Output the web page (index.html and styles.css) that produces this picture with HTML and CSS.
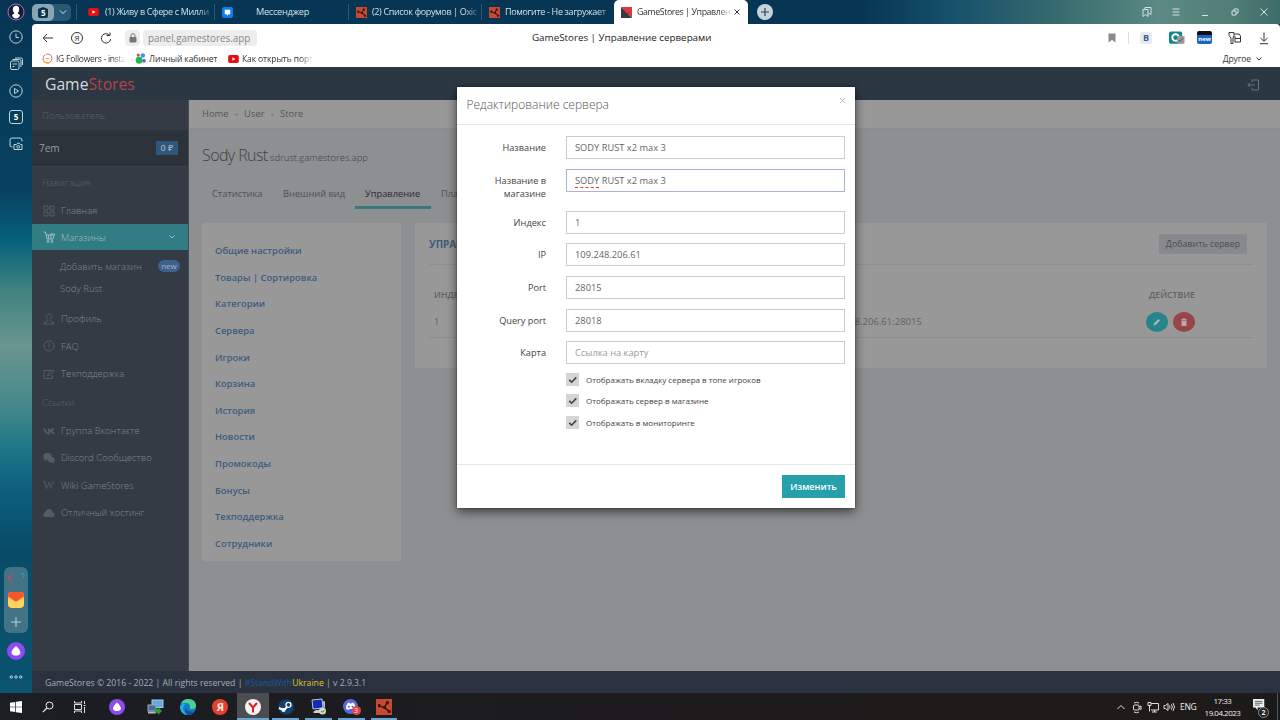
FILE: index.html
```
<!DOCTYPE html>
<html lang="ru">
<head>
    <meta charset="UTF-8">
    <meta name="viewport" content="width=device-width, initial-scale=1.0">
    <title>GameStores | Управление серверами</title>
    <link rel="stylesheet" href="styles.css">
</head>
<body>
    <!-- shared icons -->
    <svg width="0" height="0" class="defs">
        <symbol id="youtube" viewBox="0 0 12 9"><rect width="12" height="9" rx="2" fill="#e80c14"/><path d="M4.7 2.5v4L8.2 4.5z" fill="#fff"/></symbol>
        <symbol id="rust" viewBox="0 0 12 12"><rect width="12" height="12" fill="#c44a32"/><path d="M6.5 6.5L2 5M6.5 6.5L8.5 2M6.5 6.5l3.500 3" fill="none" stroke="#3d1510" stroke-width="1.100"/><path d="M1.500 3.800h1.800v2.400H1.500zM7.500 1.500l2.500.6-.8 2-1.700-.6zM8.800 8.500h2.200v2H8.800zM5.500 5.500h2v2h-2z" fill="#3d1510"/></symbol>
        <symbol id="alice" viewBox="0 0 18 18"><circle cx="9" cy="9" r="9" fill="#8d4cf2"/><path d="M9 4.200c1.300 0 4.800 5 4.500 6.800C13.200 13 11 13.500 9 13.500S4.800 13 4.500 11C4.200 9.200 7.700 4.200 9 4.200z" fill="#fff"/></symbol>
        <symbol id="check" viewBox="0 0 12 12"><path d="M3 6.300l2.200 2.200L9.500 4" fill="none" stroke="#444" stroke-width="1.500"/></symbol>
    </svg>

    <div class="desktop">
        <div class="tabbar">
            <svg class="profile" viewBox="0 0 18 18"><circle cx="9" cy="9" r="8" fill="#171c38" stroke="#9d6fc8" stroke-width="1"/><path d="M9 2.800c3 0 3.500 2.500 3 4.600-.3 1.500-1 2-1.200 3l2.200 1.500c-.5 2-2 3.500-4 3.500s-3.500-1.500-4-3.500l2.200-1.500C6.900 9.300 5.800 8.500 5.800 6.500c0-2.300 1.200-3.700 3.200-3.700z" fill="#fff"/></svg>
            <div class="tabcount"><svg viewBox="0 0 22 17"><rect width="22" height="17" rx="5" fill="#87a5b5"/><path d="M6 5L11 3l5 2v7q0 2-2 2H8q-2 0-2-2z" fill="#083450"/></svg><b>5</b><svg class="chev" viewBox="0 0 8 8"><path d="M1 2.500l3 3 3-3"/></svg></div>
            <div class="tab t1"><svg class="yt"><use href="#youtube"/></svg><span>(1) Живу в Сфере с Милли</span></div>
            <div class="tab t2"><svg viewBox="0 0 12 12"><rect width="12" height="12" rx="2.500" fill="#127de8"/><path d="M3 3h6v5H7L6 9.500 5 8H3z" fill="#fff"/></svg><span>Мессенджер</span></div>
            <div class="tab t3"><svg><use href="#rust"/></svg><span>(2) Список форумов | Oxic</span></div>
            <div class="tab t4"><svg><use href="#rust"/></svg><span>Помогите - Не загружает</span></div>
            <div class="tab active"><svg viewBox="0 0 12 12"><path d="M0 0h12v12z" fill="#e2353c"/><path d="M0 0l12 12H0z" fill="#333a44"/><path d="M3 3l3 5 3-2" stroke="#811e2a" fill="none"/></svg><span>GameStores | Управлен</span><svg class="close" viewBox="0 0 8 8"><path d="M1.500 1.500l5 5M6.500 1.500l-5 5"/></svg></div>
            <svg class="plus" viewBox="0 0 16 16"><circle cx="8" cy="8" r="8" fill="#c5d3dc"/><path d="M8 4v8M4 8h8" stroke="#33424e" stroke-width="1.200"/></svg>
            <div class="winbtns">
                <svg viewBox="0 0 12 12"><path d="M2 3.500h5v7L4.500 8.500 2 10.500zM4 3.500V1.500h6v7l-3-1.500"/></svg>
                <svg viewBox="0 0 12 12"><path d="M2.500 3h7M2.500 6h7M2.500 9h7"/></svg>
                <svg viewBox="0 0 12 12"><path d="M3 9.500h6"/></svg>
                <svg viewBox="0 0 12 12"><path d="M3 5h4v4H3zM5 5V3h4v4H7"/></svg>
                <svg viewBox="0 0 12 12"><path d="M2.500 2.500l7 7M9.500 2.500l-7 7"/></svg>
            </div>
        </div>

        <div class="workspace">
            <div class="rail">
                <svg viewBox="0 0 14 14"><circle cx="7" cy="7" r="6.200"/><path d="M7 3.500V7.500h3"/></svg>
                <svg viewBox="0 0 14 14"><rect x="1.500" y="4" width="8.500" height="8.500" rx="1.500"/><path d="M3.500 2.500h7q1.500 0 1.500 1.500v6M3.500 7h4.500M3.500 9.500h2M6 1h6q1.500 0 1.500 1.500V8"/></svg>
                <svg viewBox="0 0 14 14"><circle cx="7" cy="7" r="6.200"/><path d="M5.500 4.500v5L9.500 7z"/></svg>
                <div class="five">5</div>
                <svg viewBox="0 0 14 14"><path d="M3.500 10H3Q1 10 1 8V3q0-2 2-2h8q2 0 2 2v1.500M6 7.500h1.500l1-1.300h2l1 1.300H13v5H5v-5z"/><circle cx="9.300" cy="9.800" r="1.400"/></svg>
                <div class="dock">
                    <svg class="game" viewBox="0 0 18 14"><path class="red" d="M5 3L1.500 7 5 11"/><path class="blue-line" d="M14 2.500l2.500.5v4"/></svg>
                    <svg class="mail" viewBox="0 0 16 16"><rect width="16" height="16" rx="4" fill="#ffd45e" stroke="none"/><path d="M0 4Q0 0 4 0h8q4 0 4 4v1L8 10 0 5z" fill="#f4582a" stroke="none"/><path d="M0 5l8 5 8-5" stroke="#ffb340"/></svg>
                    <svg viewBox="0 0 14 14"><path d="M7 2v10M2 7h10"/></svg>
                </div>
                <svg class="alice"><use href="#alice"/></svg>
                <svg class="dots" viewBox="0 0 14 6"><circle cx="2.300" cy="3" r="1.200"/><circle cx="7" cy="3" r="1.200"/><circle cx="11.700" cy="3" r="1.200"/></svg>
            </div>

            <div class="browser">
                <div class="address">
                    <svg viewBox="0 0 14 14"><path d="M12 7H2.500M6 3L2.200 7 6 11"/></svg>
                    <div class="ya">Я</div>
                    <svg viewBox="0 0 14 14"><path d="M10.800 4.500A4.700 4.700 0 1 0 11.700 8M7.500 4.500h3.500V1.500"/></svg>
                    <div class="lock"><svg viewBox="0 0 10 10"><rect x="1.500" y="4" width="7" height="5.500" rx="1" fill="#777"/><path d="M3 4V2.500q0-1.800 2-1.800t2 1.800V4" fill="none" stroke="#777"/></svg></div>
                    <div class="url">panel.gamestores.app</div>
                    <div class="pagetitle">GameStores | Управление серверами</div>
                    <div class="tools">
                        <svg viewBox="0 0 14 14"><path d="M3.500 2.500h7v9L7 9l-3.500 2.500z" fill="#8b8b8b" stroke="none"/></svg>
                        <i></i>
                        <div class="vk">B</div>
                        <svg class="ext" viewBox="0 0 17 14"><rect x="0" y="0" width="14" height="13" rx="2" fill="#11868e" stroke="none"/><circle cx="7" cy="6.500" r="3.500" fill="#11868e" stroke="#fff" stroke-width="2"/><rect x="8.500" y="5" width="8" height="8" rx="1" fill="#999" stroke="none"/><path d="M10.500 9l1.500 1.700L14.500 7" stroke="#555"/></svg>
                        <div class="new-ext">new</div>
                        <svg viewBox="0 0 14 14"><path d="M1 1.500h5v3L5 7v5.500H3V7L1 4.500zM6.500 3H11l1.500 2v6H7V5M7 7.500h5.500"/></svg>
                        <svg viewBox="0 0 14 14"><path d="M7 1.500v8.500M3.500 7L7 10.300 10.500 7M3 12.700h8"/></svg>
                    </div>
                </div>
                <div class="bookmarks">
                    <div class="bm b1"><svg viewBox="0 0 12 12"><circle cx="6" cy="6" r="4.800" fill="none" stroke="#dd574b" stroke-dasharray="9 1"/><path d="M1.200 7A5 5 0 0 0 8 10.500" stroke="#f2ad38" fill="none" stroke-width="1.500"/><path d="M4 6h4" stroke="#e88" /></svg><span>IG Followers - insta</span></div>
                    <div class="bm b2"><svg viewBox="0 0 12 12"><circle cx="4.500" cy="7.800" r="3.800" fill="#1dbb56"/><circle cx="3.500" cy="2.300" r="1.700" fill="#e44"/><circle cx="8.500" cy="2.800" r="2.500" fill="#3c9be8"/><circle cx="9.800" cy="8.500" r="2" fill="#7b59c5"/></svg><span>Личный кабинет</span></div>
                    <div class="bm b3"><svg><use href="#youtube"/></svg><span>Как открыть порт</span></div>
                    <div class="other">Другое <svg viewBox="0 0 8 8"><path d="M1.500 2.500L4 5l2.500-2.500"/></svg></div>
                </div>

                <div class="page">
                    <div class="header">
                        <div class="logo">Game<span>Stores</span></div>
                        <svg viewBox="0 0 12 12"><path d="M5 3.500V1h6.500v10H5V8.500M8 6H.8M3 4L.8 6 3 8"/></svg>
                    </div>
                    <div class="main">
                        <div class="sidebar">
                            <div class="heading">Пользователь</div>
                            <div class="user"><span>7em</span><b>0 ₽</b></div>
                            <div class="heading">Навигация</div>
                            <div class="nav"><svg viewBox="0 0 12 12"><path d="M1 1h4v4H1zM7 1h4v4H7zM1 7h4v4H1zM7 7h4v4H7z"/></svg>Главная</div>
                            <div class="nav current"><svg viewBox="0 0 12 12"><path d="M.5 1h2l1.500 7h6l1.500-5H7M3 4h8M5.500 4v4M8 4v4"/><circle cx="5" cy="10.500" r="1"/><circle cx="9" cy="10.500" r="1"/></svg>Магазины<svg class="arrow" viewBox="0 0 8 8"><path d="M1.500 2.500L4 5l2.500-2.500"/></svg></div>
                            <div class="submenu">
                                <div>Добавить магазин<em>new</em></div>
                                <div>Sody Rust</div>
                            </div>
                            <div class="nav"><svg viewBox="0 0 12 12"><path d="M6 1C2 1 3.500 6 4.800 6.800V8L1 9.500V11h10V9.500L7.200 8V6.800C8.500 6 10 1 6 1z"/></svg>Профиль</div>
                            <div class="nav"><svg viewBox="0 0 12 12"><circle cx="6" cy="6" r="5"/><path d="M6 3v4M6 8v1"/></svg>FAQ</div>
                            <div class="nav"><svg viewBox="0 0 12 12"><path d="M8 2.500H1v8h8.500V7M4.500 8l.5-2 5-4.500 1.200 1.300L6.500 7.500z"/></svg>Техподдержка</div>
                            <div class="heading">Ссылки</div>
                            <div class="nav"><svg viewBox="0 0 12 12"><path d="M1 3.500Q3 8.500 6 8.500V3.500M6 6q2 0 4.500-2.500M6.500 6q3 0 4.500 3" stroke-width="1.800"/></svg>Группа Вконтакте</div>
                            <div class="nav solid"><svg viewBox="0 0 12 12"><ellipse cx="4.500" cy="4.500" rx="4.300" ry="3.500"/><ellipse cx="8.500" cy="8" rx="3.300" ry="2.800"/><path d="M1.500 6v3l2.500-1.500zM9 10l2 1.500V9z"/></svg>Discord Сообщество</div>
                            <div class="nav"><i class="wiki">W</i>Wiki GameStores</div>
                            <div class="nav solid"><svg viewBox="0 0 12 12"><path d="M2.500 10Q0 10 .3 7.500.6 6 2 5.500 3 2 6 2t3.500 3.300Q12 5.800 11.800 8 11.500 10 9.500 10z"/></svg>Отличный хостинг</div>
                        </div>

                        <div class="content">
                            <div class="crumbs"><span>Home</span><i></i><span>User</span><i></i><span>Store</span></div>
                            <div class="title">Sody Rust <small>sdrust.gamestores.app</small></div>
                            <div class="tabs">
                                <span class="s1">Статистика</span>
                                <span class="s2">Внешний вид</span>
                                <span class="s3 on">Управление</span>
                                <span class="s4">Платежи</span>
                            </div>
                            <div class="columns">
                                <div class="card menu">
                                    <a>Общие настройки</a>
                                    <a>Товары | Сортировка</a>
                                    <a>Категории</a>
                                    <a>Сервера</a>
                                    <a>Игроки</a>
                                    <a>Корзина</a>
                                    <a>История</a>
                                    <a>Новости</a>
                                    <a>Промокоды</a>
                                    <a>Бонусы</a>
                                    <a>Техподдержка</a>
                                    <a>Сотрудники</a>
                                </div>
                                <div class="card servers">
                                    <div class="servers-head"><b>УПРАВЛЕНИЕ</b><span class="add">Добавить сервер</span></div>
                                    <div class="row th"><span>ИНДЕКС</span><span></span><span>ДЕЙСТВИЕ</span></div>
                                    <div class="row"><span>1</span><span>109.248.206.61:28015</span><span class="actions">
                                        <i class="edit"><svg viewBox="0 0 10 10"><path d="M1.500 8.500l.5-2L6.500 2 8 3.500 3.500 8z" fill="#a9b9bb"/></svg></i>
                                        <i class="del"><svg viewBox="0 0 10 10"><path d="M2 2.300h6v1.200H2zM2.500 4h5v5h-5zM4 1.300h2v1H4z" fill="#bba5a8"/></svg></i>
                                    </span></div>
                                </div>
                            </div>
                        </div>
                    </div>
                    <div class="footer">GameStores © 2016 - 2022 | All rights reserved | <span class="blue">#StandWith</span><span class="yellow">Ukraine</span> | v 2.9.3.1</div>

                    <div class="modal">
                        <div class="modal-header"><span>Редактирование сервера</span><svg viewBox="0 0 8 8"><path d="M1 1l6 6M7 1L1 7"/></svg></div>
                        <div class="modal-body">
                            <div class="group"><label>Название</label><div class="input">SODY RUST x2 max 3</div></div>
                            <div class="group tall"><label>Название в<br>магазине</label><div class="input focus"><u>SODY</u> RUST x2 max 3</div></div>
                            <div class="group"><label>Индекс</label><div class="input">1</div></div>
                            <div class="group"><label>IP</label><div class="input">109.248.206.61</div></div>
                            <div class="group"><label>Port</label><div class="input">28015</div></div>
                            <div class="group"><label>Query port</label><div class="input">28018</div></div>
                            <div class="group"><label>Карта</label><div class="input placeholder">Ссылка на карту</div></div>
                            <div class="checks">
                                <div><svg><use href="#check"/></svg>Отображать вкладку сервера в топе игроков</div>
                                <div><svg><use href="#check"/></svg>Отображать сервер в магазине</div>
                                <div><svg><use href="#check"/></svg>Отображать в мониторинге</div>
                            </div>
                        </div>
                        <div class="modal-footer"><div class="save">Изменить</div></div>
                    </div>
                </div>
            </div>
        </div>

        <div class="taskbar">
            <div class="sys"><svg viewBox="0 0 12 12"><path d="M0 1.700l5.300-.8v4.800H0zM6 .8L12 0v5.700H6zM0 6.300h5.300v4.800L0 10.300zM6 6.300h6V12l-6-.8z" fill="#fff"/></svg></div>
            <div class="sys"><svg viewBox="0 0 12 12"><circle cx="7.500" cy="4.500" r="3.500" fill="none" stroke="#eee"/><path d="M5 7L.8 11.200" stroke="#eee" stroke-width="1.200"/></svg></div>
            <div class="sys"><svg viewBox="0 0 12 12"><path d="M.5 0v2h7V0M.5 12v-2h7v2M.5 3.500h7v5h-7zM10.500 0v3M10.500 6v6M9.500 4.500h2" fill="none" stroke="#ddd"/></svg></div>
            <div class="app gap"><svg><use href="#alice"/></svg></div>
            <div class="app gap"><svg viewBox="0 0 16 16"><rect x="5" y="1" width="11" height="7.500" fill="#69a8dc" stroke="#a7cbea"/><rect x="1" y="6" width="8" height="6" fill="#3d70a8" stroke="#aaa"/><path d="M1 13.500h8" stroke="#bbb" stroke-width="2"/><path d="M8 10h3V8l4 4-4 4v-2H8z" fill="#2a9c3c"/></svg></div>
            <div class="app"><svg viewBox="0 0 16 16"><circle cx="8" cy="8" r="8" fill="#147cc9"/><path d="M1 5Q3 0 8 0q8 0 8 7 0 3-4 3-3 0-2-2 0-4-4-4-3 0-5 1z" fill="#4dcf91"/><path d="M0 8q2-4 6-3-3 1-3 5 1 4 5 6-7 0-8-8z" fill="#27b4dc"/><path d="M6 8q0 5 8 4.500Q12 16 8 16 4 13 6 8z" fill="#0e529c"/></svg></div>
            <div class="app"><div class="round">Я</div></div>
            <div class="app selected"><svg viewBox="0 0 16 16"><circle cx="8" cy="8" r="8" fill="#f4f2f2"/><path d="M4 4l4 4.500L12 4M8 8v5.500" fill="none" stroke="#d4232b" stroke-width="2"/></svg></div>
            <div class="app open"><svg viewBox="0 0 16 16"><circle cx="8" cy="8" r="7.800" fill="#10416f"/><path d="M1 9l5 2 4-4" stroke="#fff" stroke-width="2" fill="none"/><circle cx="10.500" cy="5.800" r="2.500" fill="#10416f" stroke="#fff" stroke-width="1.300"/><circle cx="5.500" cy="11" r="2" fill="#fff"/></svg></div>
            <div class="app open"><svg viewBox="0 0 16 16"><path d="M2 1l10-1 1 9-10 1z" fill="#142bb5" stroke="#b9c5d3"/><path d="M3 13l3-2h5l1 3H4z" fill="#c9ced4"/><circle cx="12.500" cy="12" r="3.500" fill="#cfdccf"/><path d="M11 12l1.500 1.300L14.500 11" stroke="#37884a" fill="none"/><path d="M13 2l2 .5v6l-1.500.5" fill="#bcc4ce"/></svg></div>
            <div class="app open"><svg viewBox="0 0 16 16"><circle cx="7.500" cy="7.500" r="7.500" fill="#5967dd"/><path d="M3 10q0-4 1.500-6l2-.5.5 1h1.500l.5-1 2 .5q1.500 2 1.500 6l-2 1-1-1h-3l-1 1z" fill="#fff"/><circle cx="5.800" cy="7.800" r="1" fill="#5967dd"/><circle cx="9.500" cy="7.800" r="1" fill="#5967dd"/></svg><small>3</small></div>
            <div class="app open"><svg><use href="#rust"/></svg></div>
            <div class="tray">
                <svg viewBox="0 0 12 12"><path d="M2.500 8L6 4.500 9.500 8"/></svg>
                <svg viewBox="0 0 12 12"><rect x="2.500" y="4" width="5.500" height="5" rx="1"/><path d="M8 6l2-1v3.500L8 7.500M3 2q2.500-1.500 5 0M3 11q2.500 1.500 5 0"/></svg>
                <svg viewBox="0 0 12 12"><path d="M4 2.500h7.500V9H4M1 1.500h3v3H1zM2.500 4.500v6M7.500 9v2M5 11h5"/></svg>
                <svg viewBox="0 0 12 12"><path d="M1 4.500h1.500L5 2.500v7L2.500 7.500H1zM6.500 4.500q1 1.500 0 3M8.300 3.200q2 2.800 0 5.600M10 2q3 4 0 8"/></svg>
                <span class="lang">ENG</span>
                <div class="clock"><span>17:33</span><span>19.04.2023</span></div>
                <div class="notes"><svg viewBox="0 0 16 16"><path d="M0 0h12v9H5v3L2.500 9H0z" fill="#eee"/><path d="M2 2.500h8M2 4.500h8M2 6.500h5" stroke="#333" stroke-width=".8"/></svg><b>2</b></div>
                <i class="edge"></i>
            </div>
        </div>
    </div>
</body>
</html>
```
FILE: styles.css
```
* {
    box-sizing: border-box;
}
body {
    margin: 0;
    font-family: "Open Sans", "Noto Sans", sans-serif;
    font-size: 9.3px;
    line-height: 1.4;
    overflow: hidden;
}
i, em {
    font-style: normal;
}
svg {
    display: block;
    flex: none;
    overflow: visible;
}
.defs {
    position: absolute;
}
.desktop {
    width: 1280px;
    height: 720px;
    display: flex;
    flex-direction: column;
    background: linear-gradient(#063654 0, #07415f 190px, #07607a 240px, #40827f 290px, #69958f 345px, #498a8b 400px, #207887 445px, #0c5f7d 490px, #084b67 550px, #0a5470 693px);
}

/* Tab strip */
.tabbar {
    height: 24px;
    display: flex;
    align-items: center;
    background: linear-gradient(90deg, #063654 0, #063653 860px, #15506b 950px, #34696d 1050px, #5c8983 1160px, #527e77 1230px, #3d6b67 1280px);
    color: #d3e0e8;
    font-size: 9px;
    letter-spacing: -.35px;
    white-space: nowrap;
}
.profile {
    width: 18px;
    height: 18px;
    margin: 0 7px;
}
.tabcount {
    width: 39px;
    height: 17px;
    margin-right: 5px;
    border-radius: 5px;
    background: #2a5872;
    display: flex;
    align-items: center;
    position: relative;
}
.tabcount svg {
    width: 22px;
    height: 17px;
}
.tabcount b {
    position: absolute;
    left: 9px;
    top: 3px;
    color: #fff;
    font-size: 8px;
}
.tabcount .chev {
    width: 8px;
    height: 8px;
    margin-left: 5px;
}
.chev path, .close path, .winbtns path, .arrow path, .other path, .modal-header path {
    fill: none;
    stroke: currentColor;
}
.tab {
    display: flex;
    align-items: center;
    height: 16px;
    border-left: 1px solid #32586e;
    padding-left: 7px;
}
.tab svg {
    width: 11px;
    height: 11px;
    margin-right: 5px;
}
.tab span {
    overflow: hidden;
    flex: 1;
    -webkit-mask-image: linear-gradient(90deg, #000 85%, transparent);
    mask-image: linear-gradient(90deg, #000 85%, transparent);
}
.t1 {
    width: 138px;
    padding-left: 11px;
}
.tab .yt {
    height: 8px;
    margin-right: 6px;
}
.t2 {
    width: 134px;
}
.t2 svg {
    margin-right: 23px;
}
.t2 span {
    font-size: 9.2px;
    letter-spacing: -.3px;
    -webkit-mask-image: none;
    mask-image: none;
}
.t3 {
    width: 133px;
}
.t4 {
    width: 133px;
}
.tab.active {
    width: 134px;
    height: 24px;
    padding: 0 7px;
    border: 0;
    border-radius: 5px 5px 0 0;
    background: #fff;
    color: #333;
    font-size: 8.8px;
    letter-spacing: -.4px;
}
.tab .close {
    width: 8px;
    height: 8px;
    margin: 0 0 0 1px;
}
.plus {
    width: 16px;
    height: 16px;
    margin-left: 9px;
}
.winbtns {
    display: flex;
    gap: 17.3px;
    margin-left: auto;
    margin-right: 10px;
}
.winbtns svg {
    width: 12px;
    height: 12px;
}

/* Left rail */
.workspace {
    display: flex;
    height: 669px;
}
.rail {
    width: 32px;
    display: flex;
    flex-direction: column;
    align-items: center;
}
.rail > svg {
    width: 14px;
    height: 14px;
    margin: 6.35px 0;
}
.rail svg {
    fill: none;
    stroke: #bcd5df;
}
.five {
    width: 14px;
    height: 14px;
    margin: 6.35px 0;
    border: 1px solid #bcd5df;
    border-radius: 3px;
    color: #fff;
    font-size: 8px;
    font-weight: 700;
    line-height: 12px;
    text-align: center;
}
.dock {
    width: 24px;
    height: 66px;
    margin-top: auto;
    border-radius: 6px;
    background: #437386;
    display: flex;
    flex-direction: column;
    align-items: center;
    justify-content: space-around;
}
.dock svg {
    width: 14px;
    height: 14px;
}
.dock .game {
    width: 18px;
}
.game .red {
    stroke: #d0474e;
    stroke-width: 1.3;
}
.game .blue-line {
    stroke: #2196d6;
    stroke-width: 1.3;
}
.dock .mail {
    width: 16px;
    height: 16px;
}
.rail .alice {
    width: 18px;
    height: 18px;
    margin: 9px 0 14px;
    stroke: none;
}
.rail .dots {
    height: 6px;
    margin: 0 0 13px;
}

/* Browser window */
.browser {
    width: 1248px;
    background: #fff;
    border-radius: 4px 4px 0 0;
    color: #333;
}
.address {
    height: 27px;
    display: flex;
    align-items: center;
    padding-left: 9px;
}
.address > svg, .tools > svg {
    width: 14px;
    height: 14px;
    fill: none;
    stroke: #333;
}
.ya {
    width: 12px;
    height: 12px;
    margin: 0 16px;
    border: 1px solid #333;
    border-radius: 50%;
    font-size: 8px;
    line-height: 10px;
    text-align: center;
}
.lock {
    margin-left: 12px;
    width: 15px;
    height: 16px;
    padding: 3px 2.5px;
    background: #eee;
    border-radius: 4px;
}
.lock svg {
    width: 10px;
    height: 10px;
}
.url {
    margin-left: 3px;
    width: 114px;
    height: 16px;
    padding-left: 5px;
    background: #ededed;
    border-radius: 4px;
    color: #888;
    font-size: 9.9px;
    line-height: 16px;
}
.pagetitle {
    margin-left: 275px;
    font-size: 9.8px;
    color: #222;
}
.tools {
    margin-left: auto;
    padding-right: 9px;
    display: flex;
    align-items: center;
    gap: 15.5px;
}
.tools i {
    width: 1px;
    height: 12px;
    margin: 0 -4px 0 -7px;
    background: #ddd;
}
.vk {
    width: 12px;
    height: 12px;
    margin-right: 1px;
    background: #e8ebef;
    border-radius: 2px;
    color: #37608f;
    font-size: 9px;
    font-weight: 700;
    line-height: 12px;
    text-align: center;
}
.tools .ext {
    width: 16px;
    margin-right: -3px;
}
.new-ext {
    width: 15px;
    height: 13px;
    border-top: 4px solid #111;
    border-radius: 2px;
    background: #1d65c4;
    color: #fff;
    font-size: 6px;
    font-weight: 700;
    line-height: 8px;
    text-align: center;
}
.bookmarks {
    height: 16px;
    display: flex;
    align-items: center;
    padding-left: 10px;
    font-size: 8.5px;
    letter-spacing: -.1px;
    white-space: nowrap;
}
.bm {
    display: flex;
    align-items: center;
    width: 93px;
    gap: 3px;
}
.bm svg {
    width: 11px;
    height: 11px;
}
.bm span {
    overflow: hidden;
    -webkit-mask-image: linear-gradient(90deg, #000 82%, transparent);
    mask-image: linear-gradient(90deg, #000 82%, transparent);
}
.b1 {
    padding-right: 6px;
    letter-spacing: -.25px;
}
.b2 span {
    -webkit-mask-image: none;
    mask-image: none;
}
.b3 {
    width: 90px;
}
.b3 svg {
    height: 8px;
}
.other {
    margin-left: auto;
    margin-right: 17px;
    display: flex;
    align-items: center;
    gap: 4px;
}
.other svg {
    width: 8px;
    height: 8px;
}

/* Site */
.page {
    position: relative;
    height: 626px;
}
.header {
    height: 33px;
    padding: 0 21px 0 13px;
    display: flex;
    align-items: center;
    justify-content: space-between;
    background: #2c3744;
}
.header svg {
    width: 12px;
    height: 12px;
    margin-top: 2px;
    fill: none;
    stroke: #68727c;
}
.logo {
    padding-top: 1px;
    color: #d6dadd;
    font-size: 15.7px;
}
.logo span {
    color: #b64249;
}
.main {
    height: 571px;
    display: flex;
}
.sidebar {
    width: 157px;
    border-right: 1px solid #454c60;
    background: #353b44;
    color: #80868d;
    font-weight: 300;
    font-size: 9.5px;
}
.heading {
    height: 30px;
    padding-left: 10px;
    line-height: 31px;
    color: #5a6068;
}
.user {
    height: 37px;
    padding: 0 10px 0 7px;
    display: flex;
    align-items: center;
    justify-content: space-between;
    background: #2d333b;
    border-bottom: 1px solid #3b424b;
    color: #999fa5;
    font-size: 10px;
    font-weight: 400;
}
.user b {
    width: 22px;
    height: 14px;
    background: #2e577b;
    color: #9caebd;
    font-size: 9px;
    font-weight: 600;
    line-height: 14px;
    text-align: center;
}
.nav {
    height: 27.3px;
    padding-left: 11px;
    display: flex;
    align-items: center;
}
.nav svg {
    width: 12px;
    height: 12px;
    margin-right: 6px;
    fill: none;
    stroke: #555c64;
}
.nav.solid svg {
    fill: #555c64;
    stroke: none;
}
.wiki {
    width: 18px;
    color: #555c64;
    font-family: "Liberation Serif", serif;
    font-size: 12px;
}
.nav.current {
    height: 26px;
    background: #327d83;
    color: #a1bfc2;
}
.nav.current svg {
    stroke: #9dbfc2;
}
.nav .arrow {
    width: 8px;
    height: 8px;
    margin: 0 12px 0 auto;
}
.submenu {
    height: 55px;
    padding: 5px 8px 0 28px;
}
.submenu div {
    height: 22px;
    display: flex;
    align-items: center;
    justify-content: space-between;
}
.submenu em {
    width: 22px;
    height: 12px;
    border-radius: 6px;
    background: #3f608c;
    color: #a5b5c9;
    font-size: 8px;
    font-weight: 400;
    line-height: 11px;
    text-align: center;
}
.content {
    flex: 1;
    background: #8d8f91;
    color: #4f5153;
}
.crumbs {
    height: 29px;
    padding-left: 13px;
    display: flex;
    align-items: center;
    background: #989898;
    border-bottom: 1px solid #8a8d90;
    color: #535557;
    font-size: 9.4px;
}
.crumbs i {
    width: 3px;
    height: 3px;
    margin: 0 6.3px;
    border-radius: 50%;
    background: #828486;
}
.title {
    height: 51px;
    padding: 15px 13px 0;
    color: #404244;
    font-size: 16px;
    font-weight: 300;
    letter-spacing: -.6px;
    white-space: nowrap;
}
.title small {
    margin-left: -1px;
    font-size: 9.5px;
    letter-spacing: 0;
}
.tabs {
    height: 29px;
    padding-left: 13px;
    display: flex;
    font-size: 9.3px;
    white-space: nowrap;
}
.tabs span {
    padding: 0 10px;
    line-height: 27px;
}
.s1 {
    width: 71px;
}
.s2 {
    width: 82px;
}
.s3 {
    width: 76px;
}
.tabs .on {
    border-bottom: 3px solid #39787b;
    color: #2a2c2e;
}
.columns {
    display: flex;
    align-items: flex-start;
    gap: 14px;
    padding: 14px 13px 0;
}
.card {
    background: #989898;
}
.menu {
    width: 199px;
    height: 338px;
    padding: 15px 14px 0 13px;
    border-radius: 2px;
}
.menu a {
    display: block;
    height: 26.65px;
    line-height: 26.65px;
    color: #3e5c7c;
    font-size: 9.4px;
    font-weight: 600;
}
.servers {
    width: 852px;
    height: 145px;
    padding: 0 14px;
}
.servers-head {
    height: 42px;
    padding-right: 6px;
    display: flex;
    align-items: center;
    justify-content: space-between;
    border-bottom: 1px solid #8c8e8f;
}
.servers-head b {
    color: #3e5c7c;
    font-size: 10px;
}
.add {
    width: 88px;
    height: 20px;
    margin-top: 1px;
    background: #87898c;
    color: #4c4e52;
    font-size: 8.9px;
    line-height: 20px;
    text-align: center;
}
.row {
    height: 31px;
    padding-left: 5px;
    display: flex;
    align-items: center;
    border-bottom: 1px solid #8b8d8e;
    color: #606264;
    font-size: 9.5px;
}
.row span:nth-child(1) {
    width: 391px;
}
.row span:nth-child(2) {
    width: 322px;
}
.row.th {
    height: 42px;
    padding: 19px 0 0 5px;
    border: 0;
    font-size: 8.7px;
    font-weight: 600;
}
.row.th span:nth-child(3) {
    padding-left: 2px;
}
.actions {
    display: flex;
    gap: 5px;
    margin-left: -1px;
}
.actions i {
    width: 22px;
    height: 20px;
    padding: 5px 6px;
    border-radius: 50%;
}
.actions svg {
    width: 10px;
    height: 10px;
}
.edit {
    background: #26858a;
}
.del {
    background: #97444a;
}
.footer {
    height: 22px;
    padding-left: 13px;
    background: #2a323f;
    color: #a5acb4;
    font-size: 8.68px;
    line-height: 24px;
}
.blue {
    color: #1b5599;
}
.yellow {
    color: #e0c52a;
}

/* Modal */
.modal {
    position: absolute;
    left: 425px;
    top: 20px;
    width: 398px;
    height: 421px;
    background: #fff;
    box-shadow: 0 4px 10px rgba(0, 0, 0, .55), 0 0 2px rgba(0, 0, 0, .5);
    color: #555;
}
.modal-header {
    height: 38px;
    padding: 10px 9px 0 9.5px;
    display: flex;
    justify-content: space-between;
    border-bottom: 1px solid #e7e7e7;
    font-size: 12px;
    font-weight: 300;
}
.modal-header svg {
    width: 7px;
    height: 7px;
    color: #b5b5b5;
}
.modal-body {
    height: 340px;
    padding: 11px 10px 0;
    border-bottom: 1px solid #e7e7e7;
}
.group {
    height: 32.7px;
    display: flex;
}
.group.tall {
    height: 42px;
}
label {
    width: 79px;
    margin-right: 20px;
    padding-top: 5px;
    text-align: right;
    color: #444;
    font-size: 9.2px;
    line-height: 13.5px;
}
.input {
    width: 279px;
    height: 23px;
    padding-left: 8px;
    border: 1px solid #ccc;
    color: #666;
    font-size: 9.3px;
    line-height: 21px;
}
.focus {
    border-color: #a9b3d6;
}
.focus u {
    text-decoration: none;
    border-bottom: 1px dashed #e33;
}
.placeholder {
    color: #999;
}
.checks {
    margin-top: -5.3px;
    padding-left: 99px;
    color: #444;
    font-size: 8px;
}
.checks div {
    height: 21.35px;
    display: flex;
    align-items: center;
}
.checks svg {
    width: 13px;
    height: 13px;
    margin-right: 7px;
    background: #d5d5d5;
}
.modal-footer {
    padding: 10px;
}
.save {
    width: 63px;
    height: 23px;
    margin-left: auto;
    background: #26a1ab;
    color: #fff;
    font-size: 9.1px;
    font-weight: 600;
    line-height: 23px;
    text-align: center;
}

/* Taskbar */
.taskbar {
    height: 27px;
    display: flex;
    background: linear-gradient(90deg, #1b1e24, #1c1c20 300px, #1d1a1b 800px, #201b19 1120px, #1b1a1a);
    color: #eee;
}
.sys, .app {
    width: 32px;
    display: flex;
    align-items: center;
    justify-content: center;
    position: relative;
}
.sys svg {
    width: 12px;
    height: 12px;
}
.app {
    width: 32.7px;
}
.app.gap {
    margin-left: 5px;
}
.app svg {
    width: 16px;
    height: 16px;
}
.app.selected {
    background: #4b4d50;
}
.app.selected, .app.open {
    box-shadow: inset 0 -2px #6ba6d3;
}
.app.open {
    width: 26.7px;
    margin: 0 3px;
}
.app small {
    position: absolute;
    right: 4px;
    bottom: 5px;
    width: 9px;
    height: 9px;
    border-radius: 50%;
    background: #dd454c;
    font-size: 7px;
    line-height: 9px;
    text-align: center;
}
.round {
    width: 16px;
    height: 16px;
    border-radius: 50%;
    background: #e9402c;
    font-size: 11px;
    font-weight: 700;
    line-height: 15px;
    text-align: center;
}
.tray {
    margin-left: auto;
    display: flex;
    align-items: center;
    gap: 4px;
    font-size: 8.5px;
}
.tray > svg {
    width: 12px;
    height: 12px;
    fill: none;
    stroke: #ddd;
}
.lang {
    width: 17px;
    margin-left: 1px;
    letter-spacing: -.3px;
}
.clock {
    width: 37px;
    margin-left: 3px;
    display: flex;
    flex-direction: column;
    align-items: center;
    font-size: 8px;
    line-height: 11.5px;
    letter-spacing: -.5px;
}
.notes {
    position: relative;
    width: 19px;
    height: 16px;
    margin-left: 8px;
}
.notes svg {
    width: 15px;
    height: 15px;
}
.notes b {
    position: absolute;
    right: 3px;
    bottom: -3px;
    width: 11px;
    height: 11px;
    border: 1px solid #888;
    border-radius: 50%;
    background: #242424;
    font-size: 7px;
    line-height: 9px;
    text-align: center;
}
.edge {
    width: 1px;
    height: 27px;
    margin: 0 2px 0 1px;
    background: #555;
}
```
